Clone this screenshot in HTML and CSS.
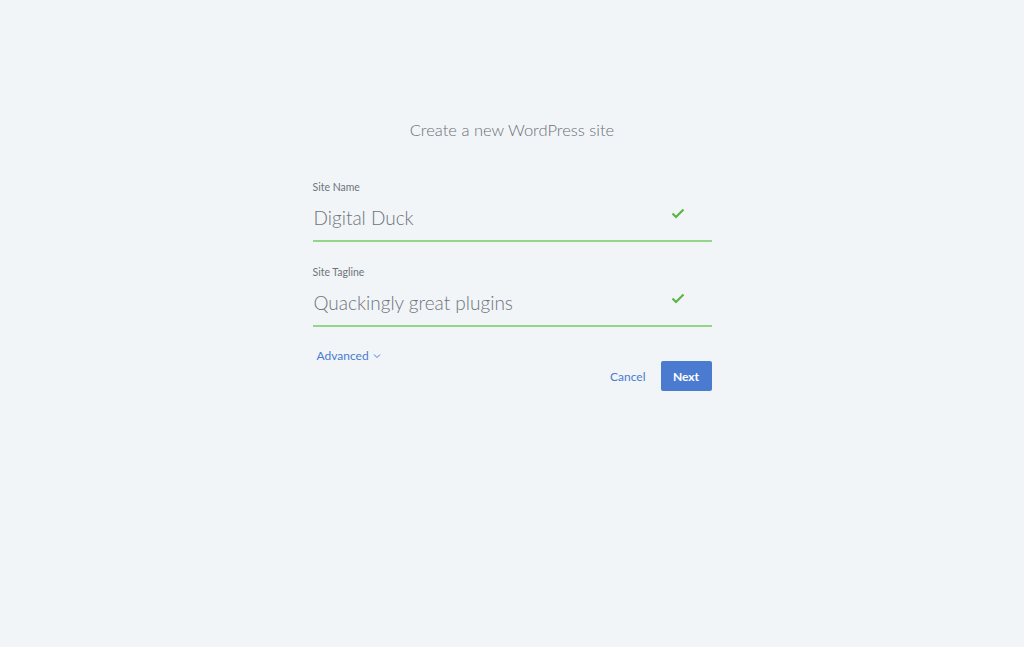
FILE: index.html
```html
<!DOCTYPE html>
<html>
<head>
<meta charset="utf-8">
<link rel="stylesheet" href="styles.css">
</head>
<body>
<main class="page">
  <h1 class="title">Create a new WordPress site</h1>
  <form class="form">
    <div class="field">
      <label class="label">Site Name</label>
      <div class="input-row">
        <span class="value">Digital Duck</span>
        <svg class="check" width="14" height="11" viewBox="0 0 14 11"><path d="M1.5 5.5 L5 9 L12.5 1.5" fill="none" stroke="#5cb545" stroke-width="2.2"/></svg>
      </div>
    </div>
    <div class="field">
      <label class="label">Site Tagline</label>
      <div class="input-row">
        <span class="value">Quackingly great plugins</span>
        <svg class="check" width="14" height="11" viewBox="0 0 14 11"><path d="M1.5 5.5 L5 9 L12.5 1.5" fill="none" stroke="#5cb545" stroke-width="2.2"/></svg>
      </div>
    </div>
    <div class="advanced">Advanced <svg class="chev" width="8" height="6" viewBox="0 0 8 6"><path d="M1 1.5 L4 4.5 L7 1.5" fill="none" stroke="#4a7bd0" stroke-width="1"/></svg></div>
    <div class="actions">
      <span class="cancel">Cancel</span>
      <span class="next">Next</span>
    </div>
  </form>
</main>
</body>
</html>
```

FILE: styles.css
```css
html, body {
  margin: 0;
  padding: 0;
  background: #f1f5f8;
  height: 100%;
}
body {
  font-family: Lato, "Open Sans", sans-serif;
  color: #6b7077;
}
.page {
  display: flex;
  flex-direction: column;
  align-items: center;
  padding-top: 117px;
}
.title {
  margin: 0;
  font-size: 16.5px;
  font-weight: 300;
  color: #6c7177;
  line-height: 26px;
}
.form {
  width: 399px;
  margin-top: 36px;
  display: flex;
  flex-direction: column;
}
.field {
  display: flex;
  flex-direction: column;
  margin-bottom: 22px;
}
.label {
  font-size: 10.5px;
  color: #6e747a;
  line-height: 16px;
}
.input-row {
  display: flex;
  justify-content: space-between;
  align-items: center;
  border-bottom: 2px solid #93d68a;
  height: 47px;
  box-sizing: border-box;
  padding: 0 27px 0 1px;
}
.value {
  font-size: 19px;
  font-weight: 300;
  color: #6f747a;
}
.check {
  margin-bottom: 8px;
}
.advanced {
  margin-top: -1px;
  padding-left: 4px;
  font-size: 12px;
  color: #4a7bd0;
  line-height: 16px;
  display: flex;
  align-items: center;
  gap: 4px;
}
.actions {
  display: flex;
  justify-content: flex-end;
  align-items: center;
  gap: 15px;
  margin-top: -3px;
}
.cancel {
  font-size: 12px;
  color: #4a7bd0;
}
.next {
  background: #4a7bd0;
  color: #fff;
  font-size: 12px;
  font-weight: 700;
  width: 51px;
  height: 30px;
  display: flex;
  align-items: center;
  justify-content: center;
  border-radius: 2px;
}
```
